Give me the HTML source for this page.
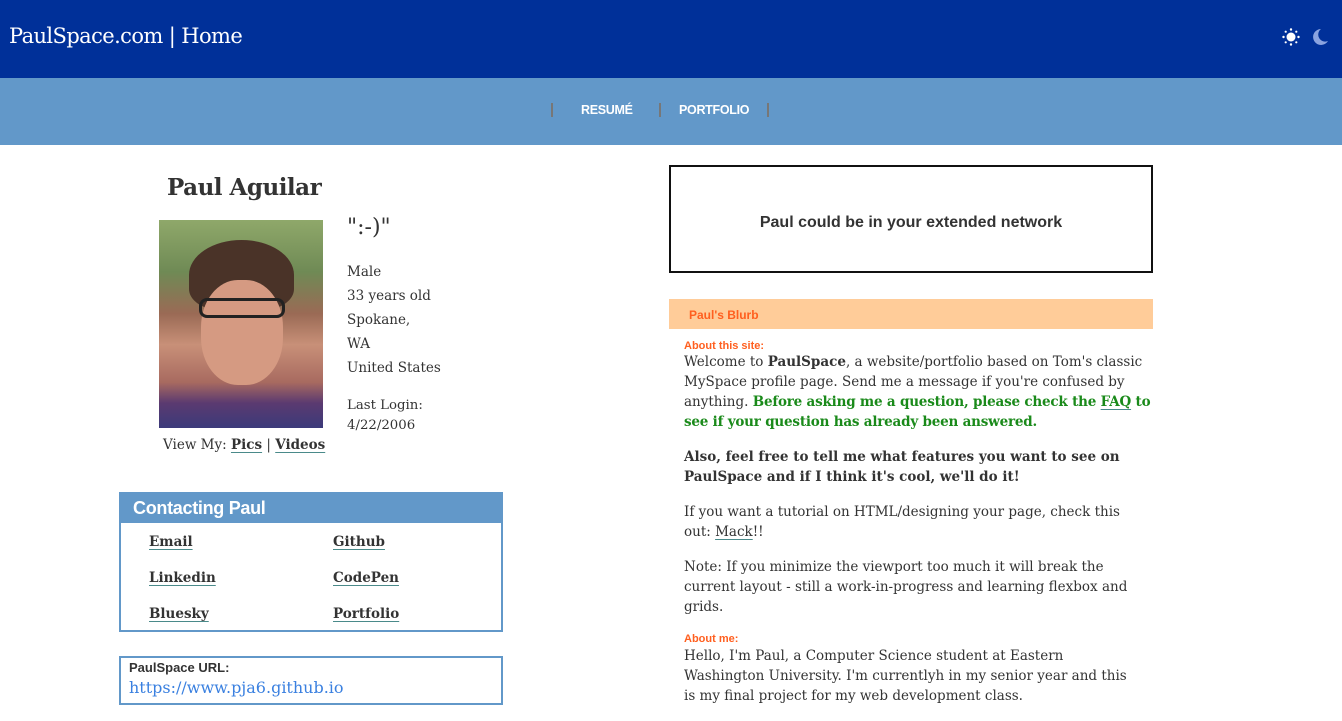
<!DOCTYPE html>
<html><head><meta charset="utf-8"><style>
*{margin:0;padding:0;box-sizing:border-box}
body{width:1342px;height:721px;overflow:hidden;background:#fff;font-family:"DejaVu Serif","Liberation Serif",serif;color:#333;position:relative}
.top{position:absolute;left:0;top:0;width:1342px;height:78px;background:#003099}
.top h1{position:absolute;left:9px;top:24px;font:400 21px "DejaVu Serif",serif;color:#fff;letter-spacing:-0.6px}
.nav{position:absolute;left:0;top:78px;width:1342px;height:67px;background:#6298c9}
.nav span{position:absolute;top:25px;font:700 12.5px "Liberation Sans",sans-serif;color:#fff;letter-spacing:-0.3px}
.nav i{position:absolute;top:25px;width:2px;height:14px;background:#777}
.a{position:absolute}
u{text-decoration:underline;text-decoration-color:#4a8a8a;text-underline-offset:3px;font-weight:700}
.s{font-size:14px;line-height:24px}
.box{position:absolute;border:2px solid #6298c9}
.r{font-size:13.5px;line-height:20px}
.o{font:700 11px "Liberation Sans",sans-serif;color:#ff5f1f}
</style></head><body>
<div class="top"><h1>PaulSpace.com | Home</h1>
<svg class="a" style="left:1282px;top:28px" width="18" height="18" viewBox="0 0 18 18"><circle cx="9" cy="9" r="4.5" fill="#fff"/><g fill="#fff"><circle cx="9" cy="1.5" r="1.2"/><circle cx="9" cy="16.5" r="1.2"/><circle cx="1.5" cy="9" r="1.2"/><circle cx="16.5" cy="9" r="1.2"/><circle cx="3.7" cy="3.7" r="1.1"/><circle cx="14.3" cy="3.7" r="1.1"/><circle cx="3.7" cy="14.3" r="1.1"/><circle cx="14.3" cy="14.3" r="1.1"/></g></svg>
<svg class="a" style="left:1311px;top:28px" width="18" height="18" viewBox="0 0 18 18"><path d="M10 1A8 8 0 1 0 17 13A7 7 0 0 1 10 1Z" fill="#8aa3e0"/></svg>
</div>
<div class="nav"><i style="left:551px"></i><span style="left:581px">RESUMÉ</span><i style="left:659px"></i><span style="left:679px">PORTFOLIO</span><i style="left:767px"></i></div>

<div class="a" style="left:167px;top:174px;font-size:23px;font-weight:700;color:#333;letter-spacing:-0.5px">Paul Aguilar</div>
<div class="a" style="left:159px;top:220px;width:164px;height:208px;background:linear-gradient(180deg,#8fa86a 0%,#6f8a55 25%,#9a6a55 45%,#c89078 60%,#a86a60 78%,#5b3a70 88%,#3b3a7a 100%)">
<div style="position:absolute;left:30px;top:20px;width:105px;height:70px;border-radius:50% 50% 30% 30%;background:#4a3328"></div>
<div style="position:absolute;left:42px;top:60px;width:82px;height:105px;border-radius:45%;background:#d59a82"></div>
<div style="position:absolute;left:40px;top:78px;width:86px;height:20px;border:3px solid #222;border-radius:8px"></div>
</div>
<div class="a" style="left:347px;top:215px;font-size:22px">":-)"</div>
<div class="a s" style="left:347px;top:260px;font-size:13.5px">Male<br>33 years old<br>Spokane,<br>WA<br>United States</div>
<div class="a" style="left:347px;top:396px;font-size:13.3px;line-height:20px">Last Login:<br>4/22/2006</div>
<div class="a" style="left:163px;top:437px;font-size:13.5px">View My: <u>Pics</u> | <u>Videos</u></div>

<div class="box" style="left:119px;top:492px;width:384px;height:140px">
<div style="height:29px;background:#6298c9;color:#fff;font:700 18px 'Liberation Sans',sans-serif;padding:4px 12px;letter-spacing:-0.3px">Contacting Paul</div>
<div class="a" style="left:28px;top:30px;font-size:13.5px;line-height:36px"><u>Email</u><br><u>Linkedin</u><br><u>Bluesky</u></div>
<div class="a" style="left:212px;top:30px;font-size:13.5px;line-height:36px"><u>Github</u><br><u>CodePen</u><br><u>Portfolio</u></div>
</div>
<div class="box" style="left:119px;top:656px;width:384px;height:49px;padding:2px 8px">
<div style="font:700 13px 'Liberation Sans',sans-serif">PaulSpace URL:</div>
<div style="color:#3a80e0;font-size:16px;margin-top:3px">https://www.pja6.github.io</div>
</div>

<div class="a" style="left:669px;top:165px;width:484px;height:108px;border:2px solid #111;text-align:center;padding-top:47px;font:700 16px 'Liberation Sans',sans-serif;color:#333">Paul could be in your extended network</div>
<div class="a" style="left:669px;top:299px;width:484px;height:30px;background:#ffcc99;padding:5px 20px" ><span class="o" style="font-size:12px">Paul's Blurb</span></div>
<div class="a" style="left:684px;top:340px;width:461px">
<div class="o">About this site:</div>
<div class="r" style="width:475px">Welcome to <b>PaulSpace</b>, a website/portfolio based on Tom's classic<br>MySpace profile page. Send me a message if you're confused by<br>anything. <b style="color:#1a8a1a;letter-spacing:-0.2px">Before asking me a question, please check the <u>FAQ</u> to<br>see if your question has already been answered.</b></div>
<div class="r" style="margin-top:15px;font-weight:700">Also, feel free to tell me what features you want to see on PaulSpace and if I think it's cool, we'll do it!</div>
<div class="r" style="margin-top:15px">If you want a tutorial on HTML/designing your page, check this out: <u style="font-weight:400">Mack</u>!!</div>
<div class="r" style="margin-top:15px">Note: If you minimize the viewport too much it will break the current layout - still a work-in-progress and learning flexbox and grids.</div>
<div class="o" style="margin-top:16px">About me:</div>
<div class="r" style="margin-top:1px">Hello, I'm Paul, a Computer Science student at Eastern<br>Washington University. I'm currentlyh in my senior year and this<br>is my final project for my web development class.</div>
</div>
</body></html>
